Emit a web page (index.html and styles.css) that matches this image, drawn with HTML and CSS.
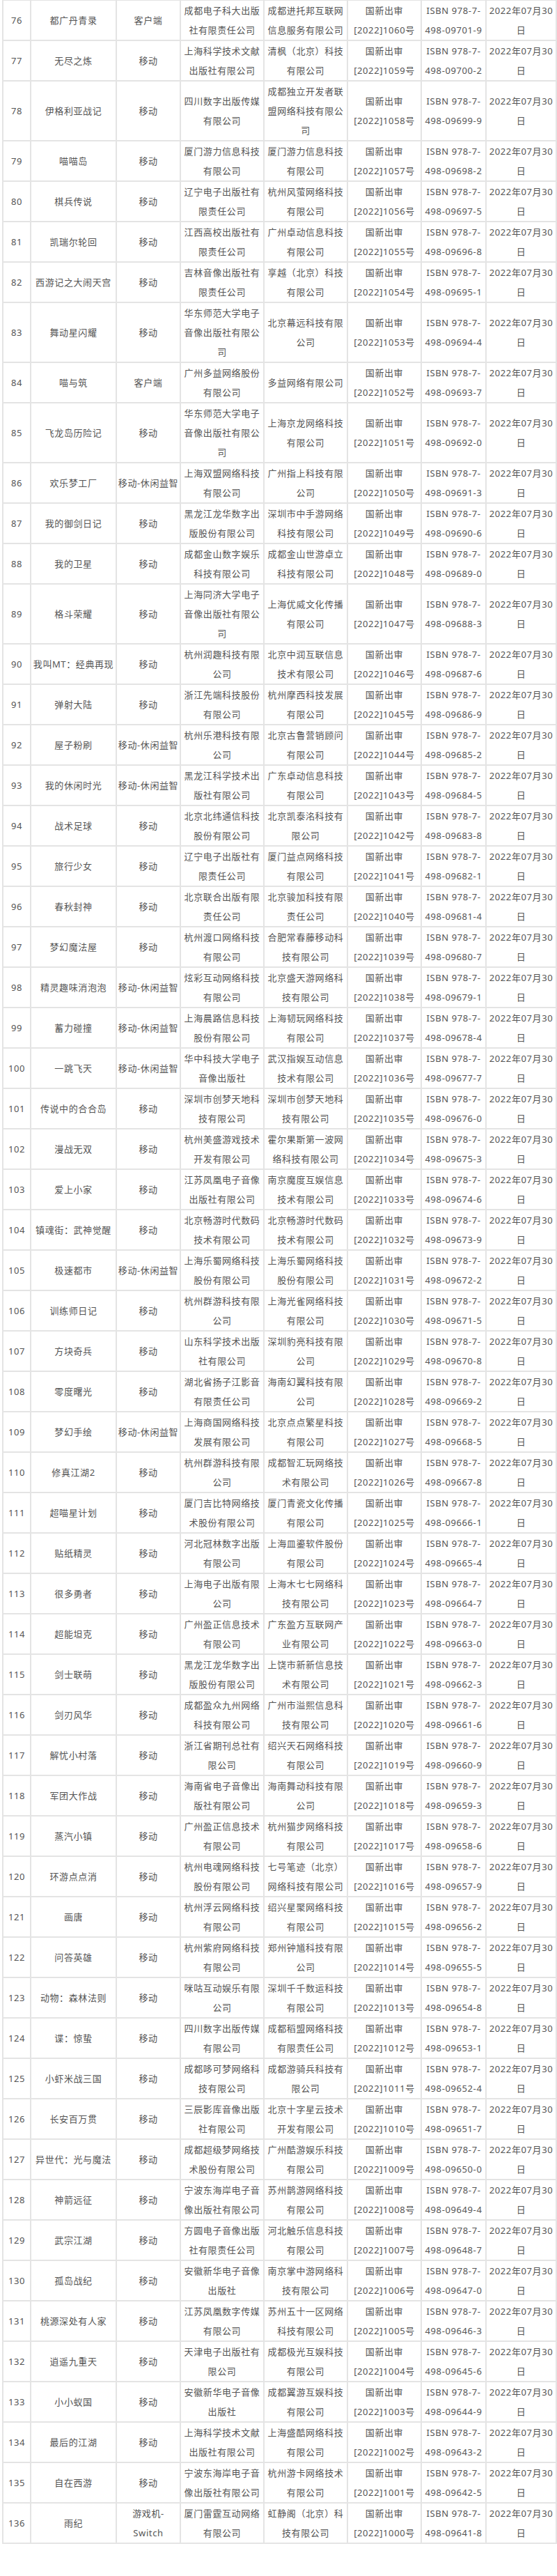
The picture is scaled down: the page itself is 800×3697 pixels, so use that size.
FILE: index.html
```html
<!DOCTYPE html>
<html lang="zh-CN">
<head>
<meta charset="utf-8">
<title>游戏审批信息</title>
<link rel="stylesheet" href="styles.css">
</head>
<body>
<div class="wrap">
<table class="list">
<colgroup>
<col class="c-no"><col class="c-name"><col class="c-type"><col class="c-pub"><col class="c-op"><col class="c-doc"><col class="c-isbn"><col class="c-date">
</colgroup>
<tbody>
<tr><td>76</td><td>都广丹青录</td><td>客户端</td><td>成都电子科大出版社有限责任公司</td><td>成都进托邦互联网信息服务有限公司</td><td>国新出审[2022]1060号</td><td>ISBN 978-7-498-09701-9</td><td>2022年07月30日</td></tr>
<tr><td>77</td><td>无尽之炼</td><td>移动</td><td>上海科学技术文献出版社有限公司</td><td>清枫（北京）科技有限公司</td><td>国新出审[2022]1059号</td><td>ISBN 978-7-498-09700-2</td><td>2022年07月30日</td></tr>
<tr><td>78</td><td>伊格利亚战记</td><td>移动</td><td>四川数字出版传媒有限公司</td><td>成都独立开发者联盟网络科技有限公司</td><td>国新出审[2022]1058号</td><td>ISBN 978-7-498-09699-9</td><td>2022年07月30日</td></tr>
<tr><td>79</td><td>喵喵岛</td><td>移动</td><td>厦门游力信息科技有限公司</td><td>厦门游力信息科技有限公司</td><td>国新出审[2022]1057号</td><td>ISBN 978-7-498-09698-2</td><td>2022年07月30日</td></tr>
<tr><td>80</td><td>棋兵传说</td><td>移动</td><td>辽宁电子出版社有限责任公司</td><td>杭州风萤网络科技有限公司</td><td>国新出审[2022]1056号</td><td>ISBN 978-7-498-09697-5</td><td>2022年07月30日</td></tr>
<tr><td>81</td><td>凯瑞尔轮回</td><td>移动</td><td>江西高校出版社有限责任公司</td><td>广州卓动信息科技有限公司</td><td>国新出审[2022]1055号</td><td>ISBN 978-7-498-09696-8</td><td>2022年07月30日</td></tr>
<tr><td>82</td><td>西游记之大闹天宫</td><td>移动</td><td>吉林音像出版社有限责任公司</td><td>享越（北京）科技有限公司</td><td>国新出审[2022]1054号</td><td>ISBN 978-7-498-09695-1</td><td>2022年07月30日</td></tr>
<tr><td>83</td><td>舞动星闪耀</td><td>移动</td><td>华东师范大学电子音像出版社有限公司</td><td>北京幕远科技有限公司</td><td>国新出审[2022]1053号</td><td>ISBN 978-7-498-09694-4</td><td>2022年07月30日</td></tr>
<tr><td>84</td><td>喵与筑</td><td>客户端</td><td>广州多益网络股份有限公司</td><td>多益网络有限公司</td><td>国新出审[2022]1052号</td><td>ISBN 978-7-498-09693-7</td><td>2022年07月30日</td></tr>
<tr><td>85</td><td>飞龙岛历险记</td><td>移动</td><td>华东师范大学电子音像出版社有限公司</td><td>上海京龙网络科技有限公司</td><td>国新出审[2022]1051号</td><td>ISBN 978-7-498-09692-0</td><td>2022年07月30日</td></tr>
<tr><td>86</td><td>欢乐梦工厂</td><td>移动-休闲益智</td><td>上海双盟网络科技有限公司</td><td>广州指上科技有限公司</td><td>国新出审[2022]1050号</td><td>ISBN 978-7-498-09691-3</td><td>2022年07月30日</td></tr>
<tr><td>87</td><td>我的御剑日记</td><td>移动</td><td>黑龙江龙华数字出版股份有限公司</td><td>深圳市中手游网络科技有限公司</td><td>国新出审[2022]1049号</td><td>ISBN 978-7-498-09690-6</td><td>2022年07月30日</td></tr>
<tr><td>88</td><td>我的卫星</td><td>移动</td><td>成都金山数字娱乐科技有限公司</td><td>成都金山世游卓立科技有限公司</td><td>国新出审[2022]1048号</td><td>ISBN 978-7-498-09689-0</td><td>2022年07月30日</td></tr>
<tr><td>89</td><td>格斗荣耀</td><td>移动</td><td>上海同济大学电子音像出版社有限公司</td><td>上海优威文化传播有限公司</td><td>国新出审[2022]1047号</td><td>ISBN 978-7-498-09688-3</td><td>2022年07月30日</td></tr>
<tr><td>90</td><td>我叫MT：经典再现</td><td>移动</td><td>杭州润趣科技有限公司</td><td>北京中润互联信息技术有限公司</td><td>国新出审[2022]1046号</td><td>ISBN 978-7-498-09687-6</td><td>2022年07月30日</td></tr>
<tr><td>91</td><td>弹射大陆</td><td>移动</td><td>浙江先端科技股份有限公司</td><td>杭州摩西科技发展有限公司</td><td>国新出审[2022]1045号</td><td>ISBN 978-7-498-09686-9</td><td>2022年07月30日</td></tr>
<tr><td>92</td><td>屋子粉刷</td><td>移动-休闲益智</td><td>杭州乐港科技有限公司</td><td>北京古鲁营销顾问有限公司</td><td>国新出审[2022]1044号</td><td>ISBN 978-7-498-09685-2</td><td>2022年07月30日</td></tr>
<tr><td>93</td><td>我的休闲时光</td><td>移动-休闲益智</td><td>黑龙江科学技术出版社有限公司</td><td>广东卓动信息科技有限公司</td><td>国新出审[2022]1043号</td><td>ISBN 978-7-498-09684-5</td><td>2022年07月30日</td></tr>
<tr><td>94</td><td>战术足球</td><td>移动</td><td>北京北纬通信科技股份有限公司</td><td>北京凯泰洺科技有限公司</td><td>国新出审[2022]1042号</td><td>ISBN 978-7-498-09683-8</td><td>2022年07月30日</td></tr>
<tr><td>95</td><td>旅行少女</td><td>移动</td><td>辽宁电子出版社有限责任公司</td><td>厦门益点网络科技有限公司</td><td>国新出审[2022]1041号</td><td>ISBN 978-7-498-09682-1</td><td>2022年07月30日</td></tr>
<tr><td>96</td><td>春秋封神</td><td>移动</td><td>北京联合出版有限责任公司</td><td>北京骏加科技有限责任公司</td><td>国新出审[2022]1040号</td><td>ISBN 978-7-498-09681-4</td><td>2022年07月30日</td></tr>
<tr><td>97</td><td>梦幻魔法屋</td><td>移动</td><td>杭州渡口网络科技有限公司</td><td>合肥常春藤移动科技有限公司</td><td>国新出审[2022]1039号</td><td>ISBN 978-7-498-09680-7</td><td>2022年07月30日</td></tr>
<tr><td>98</td><td>精灵趣味消泡泡</td><td>移动-休闲益智</td><td>炫彩互动网络科技有限公司</td><td>北京盛天游网络科技有限公司</td><td>国新出审[2022]1038号</td><td>ISBN 978-7-498-09679-1</td><td>2022年07月30日</td></tr>
<tr><td>99</td><td>蓄力碰撞</td><td>移动-休闲益智</td><td>上海晨路信息科技股份有限公司</td><td>上海韧玩网络科技有限公司</td><td>国新出审[2022]1037号</td><td>ISBN 978-7-498-09678-4</td><td>2022年07月30日</td></tr>
<tr><td>100</td><td>一跳飞天</td><td>移动-休闲益智</td><td>华中科技大学电子音像出版社</td><td>武汉指娱互动信息技术有限公司</td><td>国新出审[2022]1036号</td><td>ISBN 978-7-498-09677-7</td><td>2022年07月30日</td></tr>
<tr><td>101</td><td>传说中的合合岛</td><td>移动</td><td>深圳市创梦天地科技有限公司</td><td>深圳市创梦天地科技有限公司</td><td>国新出审[2022]1035号</td><td>ISBN 978-7-498-09676-0</td><td>2022年07月30日</td></tr>
<tr><td>102</td><td>漫战无双</td><td>移动</td><td>杭州美盛游戏技术开发有限公司</td><td>霍尔果斯第一波网络科技有限公司</td><td>国新出审[2022]1034号</td><td>ISBN 978-7-498-09675-3</td><td>2022年07月30日</td></tr>
<tr><td>103</td><td>爱上小家</td><td>移动</td><td>江苏凤凰电子音像出版社有限公司</td><td>南京魔度互娱信息技术有限公司</td><td>国新出审[2022]1033号</td><td>ISBN 978-7-498-09674-6</td><td>2022年07月30日</td></tr>
<tr><td>104</td><td>镇魂街：武神觉醒</td><td>移动</td><td>北京畅游时代数码技术有限公司</td><td>北京畅游时代数码技术有限公司</td><td>国新出审[2022]1032号</td><td>ISBN 978-7-498-09673-9</td><td>2022年07月30日</td></tr>
<tr><td>105</td><td>极速都市</td><td>移动-休闲益智</td><td>上海乐蜀网络科技股份有限公司</td><td>上海乐蜀网络科技股份有限公司</td><td>国新出审[2022]1031号</td><td>ISBN 978-7-498-09672-2</td><td>2022年07月30日</td></tr>
<tr><td>106</td><td>训练师日记</td><td>移动</td><td>杭州群游科技有限公司</td><td>上海光雀网络科技有限公司</td><td>国新出审[2022]1030号</td><td>ISBN 978-7-498-09671-5</td><td>2022年07月30日</td></tr>
<tr><td>107</td><td>方块奇兵</td><td>移动</td><td>山东科学技术出版社有限公司</td><td>深圳豹亮科技有限公司</td><td>国新出审[2022]1029号</td><td>ISBN 978-7-498-09670-8</td><td>2022年07月30日</td></tr>
<tr><td>108</td><td>零度曙光</td><td>移动</td><td>湖北省扬子江影音有限责任公司</td><td>海南幻翼科技有限公司</td><td>国新出审[2022]1028号</td><td>ISBN 978-7-498-09669-2</td><td>2022年07月30日</td></tr>
<tr><td>109</td><td>梦幻手绘</td><td>移动-休闲益智</td><td>上海商国网络科技发展有限公司</td><td>北京点点繁星科技有限公司</td><td>国新出审[2022]1027号</td><td>ISBN 978-7-498-09668-5</td><td>2022年07月30日</td></tr>
<tr><td>110</td><td>修真江湖2</td><td>移动</td><td>杭州群游科技有限公司</td><td>成都智汇玩网络技术有限公司</td><td>国新出审[2022]1026号</td><td>ISBN 978-7-498-09667-8</td><td>2022年07月30日</td></tr>
<tr><td>111</td><td>超喵星计划</td><td>移动</td><td>厦门吉比特网络技术股份有限公司</td><td>厦门青瓷文化传播有限公司</td><td>国新出审[2022]1025号</td><td>ISBN 978-7-498-09666-1</td><td>2022年07月30日</td></tr>
<tr><td>112</td><td>贴纸精灵</td><td>移动</td><td>河北冠林数字出版有限公司</td><td>上海皿鎏软件股份有限公司</td><td>国新出审[2022]1024号</td><td>ISBN 978-7-498-09665-4</td><td>2022年07月30日</td></tr>
<tr><td>113</td><td>很多勇者</td><td>移动</td><td>上海电子出版有限公司</td><td>上海木七七网络科技有限公司</td><td>国新出审[2022]1023号</td><td>ISBN 978-7-498-09664-7</td><td>2022年07月30日</td></tr>
<tr><td>114</td><td>超能坦克</td><td>移动</td><td>广州盈正信息技术有限公司</td><td>广东盈方互联网产业有限公司</td><td>国新出审[2022]1022号</td><td>ISBN 978-7-498-09663-0</td><td>2022年07月30日</td></tr>
<tr><td>115</td><td>剑士联萌</td><td>移动</td><td>黑龙江龙华数字出版股份有限公司</td><td>上饶市新新信息技术有限公司</td><td>国新出审[2022]1021号</td><td>ISBN 978-7-498-09662-3</td><td>2022年07月30日</td></tr>
<tr><td>116</td><td>剑刃风华</td><td>移动</td><td>成都盈众九州网络科技有限公司</td><td>广州市溢熙信息科技有限公司</td><td>国新出审[2022]1020号</td><td>ISBN 978-7-498-09661-6</td><td>2022年07月30日</td></tr>
<tr><td>117</td><td>解忧小村落</td><td>移动</td><td>浙江省期刊总社有限公司</td><td>绍兴天石网络科技有限公司</td><td>国新出审[2022]1019号</td><td>ISBN 978-7-498-09660-9</td><td>2022年07月30日</td></tr>
<tr><td>118</td><td>军团大作战</td><td>移动</td><td>海南省电子音像出版社有限公司</td><td>海南舞动科技有限公司</td><td>国新出审[2022]1018号</td><td>ISBN 978-7-498-09659-3</td><td>2022年07月30日</td></tr>
<tr><td>119</td><td>蒸汽小镇</td><td>移动</td><td>广州盈正信息技术有限公司</td><td>杭州猫步网络科技有限公司</td><td>国新出审[2022]1017号</td><td>ISBN 978-7-498-09658-6</td><td>2022年07月30日</td></tr>
<tr><td>120</td><td>环游点点消</td><td>移动</td><td>杭州电魂网络科技股份有限公司</td><td>七号笔迹（北京）网络科技有限公司</td><td>国新出审[2022]1016号</td><td>ISBN 978-7-498-09657-9</td><td>2022年07月30日</td></tr>
<tr><td>121</td><td>画唐</td><td>移动</td><td>杭州浮云网络科技有限公司</td><td>绍兴星聚网络科技有限公司</td><td>国新出审[2022]1015号</td><td>ISBN 978-7-498-09656-2</td><td>2022年07月30日</td></tr>
<tr><td>122</td><td>问答英雄</td><td>移动</td><td>杭州紫府网络科技有限公司</td><td>郑州钟馗科技有限公司</td><td>国新出审[2022]1014号</td><td>ISBN 978-7-498-09655-5</td><td>2022年07月30日</td></tr>
<tr><td>123</td><td>动物：森林法则</td><td>移动</td><td>咪咕互动娱乐有限公司</td><td>深圳千千数运科技有限公司</td><td>国新出审[2022]1013号</td><td>ISBN 978-7-498-09654-8</td><td>2022年07月30日</td></tr>
<tr><td>124</td><td>谍：惊蛰</td><td>移动</td><td>四川数字出版传媒有限公司</td><td>成都稻盟网络科技有限责任公司</td><td>国新出审[2022]1012号</td><td>ISBN 978-7-498-09653-1</td><td>2022年07月30日</td></tr>
<tr><td>125</td><td>小虾米战三国</td><td>移动</td><td>成都哆可梦网络科技有限公司</td><td>成都游骑兵科技有限公司</td><td>国新出审[2022]1011号</td><td>ISBN 978-7-498-09652-4</td><td>2022年07月30日</td></tr>
<tr><td>126</td><td>长安百万贯</td><td>移动</td><td>三辰影库音像出版社有限公司</td><td>北京十字星云技术开发有限公司</td><td>国新出审[2022]1010号</td><td>ISBN 978-7-498-09651-7</td><td>2022年07月30日</td></tr>
<tr><td>127</td><td>异世代：光与魔法</td><td>移动</td><td>成都超级梦网络技术股份有限公司</td><td>广州酷游娱乐科技有限公司</td><td>国新出审[2022]1009号</td><td>ISBN 978-7-498-09650-0</td><td>2022年07月30日</td></tr>
<tr><td>128</td><td>神箭远征</td><td>移动</td><td>宁波东海岸电子音像出版社有限公司</td><td>苏州鹊游网络科技有限公司</td><td>国新出审[2022]1008号</td><td>ISBN 978-7-498-09649-4</td><td>2022年07月30日</td></tr>
<tr><td>129</td><td>武宗江湖</td><td>移动</td><td>方圆电子音像出版社有限责任公司</td><td>河北触乐信息科技有限公司</td><td>国新出审[2022]1007号</td><td>ISBN 978-7-498-09648-7</td><td>2022年07月30日</td></tr>
<tr><td>130</td><td>孤岛战纪</td><td>移动</td><td>安徽新华电子音像出版社</td><td>南京掌中游网络科技有限公司</td><td>国新出审[2022]1006号</td><td>ISBN 978-7-498-09647-0</td><td>2022年07月30日</td></tr>
<tr><td>131</td><td>桃源深处有人家</td><td>移动</td><td>江苏凤凰数字传媒有限公司</td><td>苏州五十一区网络科技有限公司</td><td>国新出审[2022]1005号</td><td>ISBN 978-7-498-09646-3</td><td>2022年07月30日</td></tr>
<tr><td>132</td><td>逍遥九重天</td><td>移动</td><td>天津电子出版社有限公司</td><td>成都极光互娱科技有限公司</td><td>国新出审[2022]1004号</td><td>ISBN 978-7-498-09645-6</td><td>2022年07月30日</td></tr>
<tr><td>133</td><td>小小蚁国</td><td>移动</td><td>安徽新华电子音像出版社</td><td>成都翼游互娱科技有限公司</td><td>国新出审[2022]1003号</td><td>ISBN 978-7-498-09644-9</td><td>2022年07月30日</td></tr>
<tr><td>134</td><td>最后的江湖</td><td>移动</td><td>上海科学技术文献出版社有限公司</td><td>上海盛酷网络科技有限公司</td><td>国新出审[2022]1002号</td><td>ISBN 978-7-498-09643-2</td><td>2022年07月30日</td></tr>
<tr><td>135</td><td>自在西游</td><td>移动</td><td>宁波东海岸电子音像出版社有限公司</td><td>杭州游卡网络技术有限公司</td><td>国新出审[2022]1001号</td><td>ISBN 978-7-498-09642-5</td><td>2022年07月30日</td></tr>
<tr><td>136</td><td>雨纪</td><td>游戏机-<br>Switch</td><td>厦门雷霆互动网络有限公司</td><td>虹静阁（北京）科技有限公司</td><td>国新出审[2022]1000号</td><td>ISBN 978-7-498-09641-8</td><td>2022年07月30日</td></tr>
</tbody>
</table>
</div>
</body>
</html>
```

FILE: styles.css
```css
html, body {
  margin: 0;
  padding: 0;
  background: #ffffff;
}

body {
  font-family: "Noto Sans", "Noto Sans CJK SC", sans-serif;
  font-size: 13px;
  letter-spacing: 0.6px;
  color: #555555;
}

.wrap {
  margin: -1px 0 0 3px;
  padding-bottom: 48px;
}

.list {
  border-collapse: collapse;
  table-layout: fixed;
  width: 795px;
}

.list td {
  border: 2px solid #e4e4e4;
  padding: 0 1px;
  line-height: 28px;
  text-align: center;
  vertical-align: middle;
  word-break: normal;
}

.c-no { width: 40px; }
.c-name { width: 123px; }
.c-type { width: 92px; }
.c-pub { width: 120px; }
.c-op { width: 120px; }
.c-doc { width: 106px; }
.c-isbn { width: 93px; }
.c-date { width: 101px; }
```
